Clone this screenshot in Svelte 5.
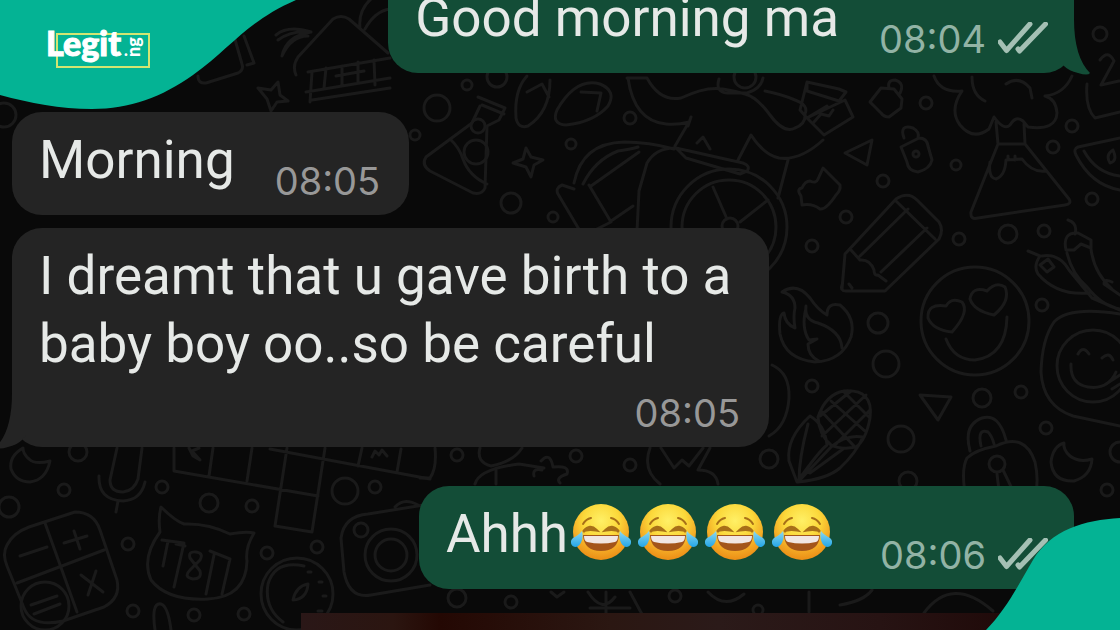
<script>
  const messages = [
    { side: 'out', text: 'Good morning ma', time: '08:04', read: true, tail: true, gap: true },
    { side: 'in', text: 'Morning', time: '08:05' },
    { side: 'in', text: 'I dreamt that u gave birth to a baby boy oo..so be careful', time: '08:05', tail: true, gap: true, long: true },
    { side: 'out', text: 'Ahhh', laughs: 4, time: '08:06', read: true }
  ];

  // Small rings scattered between the wallpaper drawings: x, y, radius
  const rings = [
    [437, 108, 13], [467, 85, 5], [497, 77, 10], [415, 135, 5], [511, 203, 10], [553, 217, 5],
    [571, 144, 5], [630, 118, 6], [926, 103, 6], [956, 165, 5], [1072, 126, 6], [1053, 147, 6],
    [1092, 199, 6], [883, 181, 6], [846, 217, 6], [812, 246, 6], [959, 239, 6], [1008, 234, 9],
    [1044, 231, 6], [878, 323, 10], [886, 364, 13], [812, 386, 6], [1042, 305, 6], [1021, 392, 6],
    [982, 398, 9], [1046, 428, 6], [901, 439, 13], [769, 459, 9], [908, 481, 9], [1107, 490, 6],
    [64, 490, 6], [78, 452, 9], [9, 507, 10], [162, 487, 6], [209, 503, 9], [252, 506, 6],
    [345, 491, 13], [375, 487, 6], [128, 544, 6], [267, 553, 6], [317, 547, 6], [133, 611, 6],
    [194, 615, 6], [244, 614, 6], [361, 530, 7], [457, 455, 6], [576, 456, 6], [630, 465, 6],
    [457, 598, 9], [511, 602, 6], [675, 596, 6], [758, 610, 5], [1120, 452, 10], [4, 115, 12],
    [1100, 34, 7], [1068, 35, 3]
  ];
</script>

{#snippet ticks()}
  <svg class="ticks" viewBox="0 0 50 34" role="img" aria-label="Delivered">
    <path d="M2 20 8.500 28.500 32 2M21.500 29 47.500 2M21.500 29 20 27" />
  </svg>
{/snippet}

{#snippet laugh()}
  <svg class="laugh" viewBox="0 0 60 60" role="img" aria-label="Face with tears of joy">
    <circle cx="30" cy="30" r="28" fill="url(#face)" />
    <path d="M12 22q3-5 8-6M48 22q-3-5-8-6" class="brow" />
    <path d="M13 29q6-7 12-1-6-1-10 0M47 29q-6-7-12-1 6-1 10 0" class="eye" />
    <path d="M12 33h36q-1 16-18 16T12 33z" fill="#a4551a" />
    <path d="M13 34h34q0 5-3 6-14 3-28 0-3-1-3-6z" fill="#f1e6e2" />
    <path d="M11 29c2 7-1 15-6 16-5 0-7-6-3-9 3-2 6-3 9-7z" fill="url(#tear)" />
    <path d="M49 29c-2 7 1 15 6 16 5 0 7-6 3-9-3-2-6-3-9-7z" fill="url(#tear)" />
  </svg>
{/snippet}

<svg class="defs" aria-hidden="true">
  <defs>
    <radialGradient id="face" cx=".5" cy=".3" r=".72">
      <stop offset="0" stop-color="#fff066" />
      <stop offset=".45" stop-color="#fbd83a" />
      <stop offset=".75" stop-color="#f3a824" />
      <stop offset="1" stop-color="#ea8a14" />
    </radialGradient>
    <linearGradient id="tear" x1="0" y1="0" x2="0" y2="1">
      <stop offset="0" stop-color="#8fd8ee" />
      <stop offset="1" stop-color="#23a6e8" />
    </linearGradient>
  </defs>
</svg>

<div class="page">
  <svg class="wallpaper" viewBox="0 0 1120 630" preserveAspectRatio="xMidYMid slice" aria-hidden="true">
    {#each rings as [cx, cy, r]}
      <circle {cx} {cy} {r} />
    {/each}

    <!-- parcel, star, beach house -->
    <path d="M198 76q0 8 8 7l32-10q6-3 4-9l-8-28M244 36l10 27-7 2M258 88l13 2 7-8 2 13 8 6-11 1-6 9-4-12zM296 75q-4-9 2-18l35-38q8-5 16 0l39 34M276 35q12-10 35-3-20-2-33 8M311 32q-25 4-29 24 9-20 26-20M360 28q-2-18 12-30M365 29q10-18 25-20M308 72l82-14M306 92l84-14M312 100l78-12M312 72l-2 30M326 68l-2 20M342 66v20M358 62v20M374 60l1 25M336 76l28-5" />
    <!-- party flask -->
    <path d="M478 97l27 11-6 12-12 6-2 62q-3 7-12 5l-43-22q-9-6-4-14l46-34 8-17M482 105l22 9M450 139q9 8 13 20 6 17 24 25" />
    <circle cx="478" cy="126" r="7" /><circle cx="476" cy="152" r="12" />
    <path d="M526 148l5 9 12 3-9 5-3 12-5-10-13-4 10-4z" />
    <!-- leaves -->
    <path d="M527 76q-13 14-11 42 2 11 12 8 22-14 22-46M527 92l15-8 7 13M566 125q-15-1-9-15 19-33 43-26 17 7 8 22-14 16-42 19zM581 92l20 1-4 18" />
    <!-- whale, flower and scooter -->
    <path d="M627 78h20q13 24 34 20 25-12 42-9 12 2 22 5 12 3 25 21 14 19 25 13 11-4 10-14 4-9-10-14-14-6-30-9M628 78q6 43 38 46 12 1 23-2l-14 24M691 117l-3 9M674 148q-18 0-27 15l-8 28-2 40M574 189l-12-4q-7 3-4 9l22 37M589 185l22 37-16 8M574 183q8-40 50-41 25 0 50 7M583 184q12-24 35-33 14-2 20-4M591 186l48-34M611 221l22-15M676 148l67 15q8 3 4 8l-7 3-54-16zM697 143l6-6 7 12M738 160l13-25q13 20 28 23 21 3 44-18M788 160l-10 38M719 79q-4 13 8 14h20q14-4 16-15M807 82l32 7 7 3-7 9-32-10zM807 82l-7 28 7 8 20-12M807 118l38-18 8 17-29 18zM814 122l7-8 8 2 4-6" />
    <circle cx="745" cy="77" r="11" />
    <circle cx="729" cy="227" r="58" /><circle cx="729" cy="227" r="47" />
    <path d="M713 187l14 32M740 222l28-22" /><circle cx="730" cy="226" r="8" />
    <path d="M772 365q18 8 17 33-2 28-20 38" />
    <!-- small lock, tag, triangle, splash -->
    <path d="M870 102l11-14 13 1 8 10-1 9-12 9q-5 0-8-4zM889 88q-2-8 6-8 10 3 5 13M901 147l18-9q8 0 9 8l4 14q-2 9-14 12-10-1-11-10zM904 138q-5-14 9-10 7 4 5 10M845 153l27-13-5 25zM823 168l17 17q1 5-4 10-10 15-16 14-8-6-18-4-1-9-1-9-5-7 1-8 3-7 8-7 6 3 8-2z" />
    <circle cx="916" cy="154" r="3" />
    <!-- volcano -->
    <path d="M934 76q6 17 28 15-13 19-2 34 13 16 29 4l5-12q10 14 16 8 6-10 13-4l5 6q28 4 29-14-1-14-12-17 19-2 27-20M972 77q0 18 13 24M1006 84q13-9 24 4l2 10M996 122l2 22-27 68q-1 8 7 6l87-13q7-1 4-6l-44-55-1-20M999 144h25M990 162q-2 16 6 17 9-3 10-19l16-1q10 14 24 12M1008 156v4M1015 156v4" />
    <!-- pencil -->
    <path d="M842 289l3-35 51-55q12-8 21 1l22 22q5 8 0 17l-54 52h-39q-6 0-4-6zM851 250l9 10q10-1 14 10 0 6 4 5l8 6M860 256l48-47M881 272l46-44M896 201l39 38M849 284l3 4" />
    <!-- flame -->
    <path d="M782 292q15-10 28 6 8 12 17 17 0-13 13-10 16 13 11 32-9 24-36 25-30-3-35-28-2-19 4-21 1 11 11 15-2-12 0-20 0-13-13-16zM806 306q-2 14 12 17 23 8 24 25M806 308q-5 20 3 32l8-1-9 5q0 12 11 17" />
    <!-- heart-eyed face -->
    <circle cx="975" cy="321" r="54" />
    <path d="M952 332q-19-2-24-14-1-15 18-12 5-9 16-4 8 10-10 30zM994 315q-20-4-24-16 2-13 17-8 9-10 18-4 6 14-11 28zM946 339q8 21 29 21 31-4 32-43" />
    <!-- chilli peppers -->
    <path d="M1028 251l12 5q-7 10-2 18 19 22 51 19M1042 256q17-3 27 14l23 28 28 12M1040 265l8-6 6 8-7 5zM1068 220q10 3 7 14M1066 250q-4-18 12-17l13 7v8l-10-4-7 6zM1067 253q5 21 20 34 15 19 33 22M1091 249q3 24 21 40M1112 282q-8-4-8 2l16 11" />
    <!-- watermelon, calendar -->
    <path d="M1120 138l-42 9q-5 2-2 8 15 30 44 35M1084 151q12 22 36 25M1113 150q-8 5-3 13 8-2 3-13M1087 84q-2 24 8 34l25-6M1100 60q8-11 14 1l-13 24 18-4" />
    <!-- hugging face -->
    <path d="M1120 314q-51-8-66 8-12 17-13 50 2 34 32 44l47 10" />
    <circle cx="1093" cy="366" r="36" />
    <path d="M1071 364q-1 20 17 23 20 3 28-15M1078 354q5-9 11 0M1102 358q7-7 11 2M1106 384l14-9M1112 389l8-5" />
    <!-- corn -->
    <path d="M818 417q8-23 26-26 30-2 26 27-4 22-14 29-15 3-25-2-12-10-13-28zM831 401l35 31M844 392l25 25M821 411l33 35M866 395l-44 41M870 410l-36 36M851 391l-31 25M810 416q-24 22-21 45l8 21q23-32 30-37-2-20-17-29zM808 424q-9 34-9 57M798 482q29-3 42-14 16-15 23-31-17-3-32 10zM810 473l33-24" />
    <!-- paper plane -->
    <path d="M920 395l31 2-13 23z" />
    <!-- padlock -->
    <path d="M970 451q-7-26 12-33 17-5 24 22M981 446q-4-18 7-14 4 4 6 12M967 458q8-8 29-12 29-14 39 16 5 22-2 41h-66q-7-32 0-45z" />
    <circle cx="997" cy="464" r="8" /><path d="M997 474l3 25 16-2-13-27" />
    <path d="M1064 443q-11 3-13 19 2 20 23 19 17-5 18-22-13 4-22-3-7-6-6-13z" />
    <path d="M23 448q-14 8-12 21 5 13 19 13 16-2 20-21-15 4-21-2-6-5-6-11z" />
    <!-- microphone -->
    <path d="M117 448l-7 32q0 12 13 12 11-1 15-13l4-31M99 476q-1 24 24 25 18-1 22-19M118 501l-2 11" />
    <!-- crossword -->
    <path d="M174 448v23l144 25M213 448l-4 28M252 448l-5 33M287 448l-12 78 37 6 13-84M270 449l160 30M362 448l-4 18M401 449l-4 23M189 448l4 8 7 4-8-9 7-3M372 457l3-6 4 4 3-5 5 6" />
    <!-- calculator -->
    <path d="M7 545q6-12 22-18l46-15q19 0 25 18l17 50q4 18-13 27l-41 14q-31 7-39-13L7 566q-5-12 0-21zM45 523l32 89M17 583l87-33M20 556l27-9M74 531l6 18M64 543l23-7M81 575l22 17M96 571l-8 24" />
    <circle cx="45" cy="606" r="24" /><path d="M31 605l26-9M34 614l26-10" />
    <!-- cat -->
    <path d="M161 507q-3 11-1 25-19 26-9 48 16 21 57 19 38-2 39-38-2-13 7-28-8-2-24 1-22-11-46-10-9-3-23-17zM162 540l22 3-10 44M168 541l-5 25M196 552q-8-1-6 6l10 13q2 8-7 8-10-2-3-9l10-10q4-7-4-8M210 551l20 8-8 35M214 555l-8 39M176 544l9 2" />
    <!-- stopwatch -->
    <circle cx="297" cy="594" r="36" /><path d="M304 566q-29-6-36 18-4 24 15 38M293 600q3-14 15-16-1 15-15 16zM308 572h3M319 582h3M323 596h3M318 611h4M155 630q-4-28 6-26 7 2 10 26" />
    <!-- camera -->
    <path d="M430 504l-62 10q-24 2-27 24l3 34q5 27 27 23l59-10M395 507q9-10 23-2" />
    <circle cx="391" cy="555" r="26" /><circle cx="391" cy="555" r="16" />
    <!-- drawings below and above the replies -->
    <path d="M420 478h10q7-10 5-30M480 448q-4 14 11 18 22-4 31-18M475 484q4-15 44-20l25 4M496 470v14M541 461q9-10 12 6 17-2 14 7-12 4-7 9M534 476q-2-8 8-6M650 448q-8 22 10 36M661 448l13 20 8-8 7 6 14-18M710 448l-12 22q18 0 20 14M588 592q14 22 27 5M606 592v26M590 608h40M630 592l14 26M708 592q17 18 36 2M809 592v20M840 605q24-4 32-15M924 613q28-38 69-2M551 592l6 5 7-5" />
  </svg>

  <main class="chat">
    {#each messages as m}
      <article class="bubble {m.side}" class:gap={m.gap} class:long={m.long}>
        <p class="text">{m.text}{#if m.laughs}<span class="laughs">{#each Array(m.laughs) as _}{@render laugh()}{/each}</span>{/if}</p>
        <footer class="meta">
          <time>{m.time}</time>
          {#if m.read}{@render ticks()}{/if}
        </footer>
        {#if m.tail}
          <svg class="tail" viewBox="0 0 30 56" aria-hidden="true">
            <path d="M0 0h14q0 38 16 54-2 3-12 0-9-2-14-7L0 42z" />
          </svg>
        {/if}
      </article>
    {/each}
    <div class="photo"></div>
  </main>

  <svg class="corner top" viewBox="0 0 296 110" aria-hidden="true">
    <path d="M0 0h296C246 22 232 47 193 75 162 97 130 109 92 109 60 109 30 103 0 95z" />
  </svg>
  <svg class="corner bottom" viewBox="0 0 134 112" aria-hidden="true">
    <path d="M134 0C98 2 65 12 47 42 34 64 20 92 0 112h134z" />
  </svg>
  <svg class="logo" viewBox="0 0 104 44" role="img" aria-label="Legit.ng">
    <rect x="9" y="9" width="92" height="33" />
    <text class="name" x="-2" y="31">Legit</text>
    <text class="dot" x="76" y="31">.</text>
    <text class="suffix" transform="translate(92 32) rotate(-90)">ng</text>
  </svg>
</div>

<style>
  :global(body) {
    margin: 0;
    background: #090909;
  }
  .page {
    position: relative;
    display: flex;
    min-height: 100vh;
    overflow: hidden;
    background: #090909;
    color: #e6e9e7;
    font-family: Roboto, 'Liberation Sans', sans-serif;
  }
  .defs {
    position: absolute;
    width: 0;
    height: 0;
  }
  .wallpaper {
    position: absolute;
    inset: 0;
    width: 100%;
    height: 100%;
    fill: none;
    stroke: #1a1a1a;
    stroke-width: 3;
    stroke-linejoin: round;
    stroke-linecap: round;
  }
  .chat {
    position: relative;
    flex: 1;
    display: flex;
    flex-direction: column;
    gap: 13px;
    margin-top: -30px;
    padding: 0 46px 0 12px;
  }
  .bubble {
    position: relative;
    box-sizing: border-box;
    display: flex;
    min-height: 103px;
    padding: 14px 29px 11px 27px;
    border-radius: 30px;
  }
  .in {
    align-self: flex-start;
    background: #242424;
    --fill: #242424;
    --muted: #989898;
  }
  .out {
    align-self: flex-end;
    background: #134d37;
    --fill: #134d37;
    --muted: #92b3a5;
    padding-right: 26px;
  }
  .gap {
    margin-bottom: 26px;
  }
  .text {
    display: flex;
    margin: 0;
    font-size: 53px;
    line-height: 68px;
  }
  .meta {
    display: flex;
    align-items: center;
    align-self: flex-end;
    gap: 12px;
    margin-left: 40px;
    color: var(--muted);
    font-family: Inter, sans-serif;
    font-size: 38px;
    line-height: 46px;
  }
  .long {
    flex-direction: column;
    max-width: 757px;
  }
  .long .meta {
    margin-top: 12px;
  }
  .ticks {
    width: 50px;
    height: 34px;
    fill: none;
    stroke: #a4c0b4;
    stroke-width: 5;
    stroke-linecap: round;
    stroke-linejoin: round;
  }
  .laughs {
    display: flex;
    align-items: flex-start;
    gap: 7px;
    margin: 0 8px 0 3px;
  }
  .laugh {
    width: 60px;
    height: 60px;
    margin-top: 2px;
  }
  .brow,
  .eye {
    fill: none;
    stroke: #a87018;
    stroke-width: 2;
    stroke-linecap: round;
  }
  .eye {
    stroke-width: 3;
  }
  .tail {
    position: absolute;
    right: -16px;
    bottom: -2px;
    width: 30px;
    height: 56px;
    fill: var(--fill);
  }
  .in .tail {
    right: auto;
    left: -16px;
    transform: scaleX(-1);
  }
  .photo {
    flex: 1;
    min-height: 17px;
    margin: 11px 0 0 289px;
    background: linear-gradient(90deg, #2a1717, #2b1510 12%, #240803 18%, #2b1712 40%, #2b1a19 54%, #271313 75%, #1c0504);
  }
  .corner {
    position: absolute;
    fill: #04b394;
  }
  .top {
    top: 0;
    left: 0;
    width: 296px;
    height: 110px;
  }
  .bottom {
    right: 0;
    bottom: 0;
    width: 134px;
    height: 112px;
  }
  .logo {
    position: absolute;
    top: 25px;
    left: 48px;
    width: 104px;
    height: 44px;
    overflow: visible;
    fill: #fff;
    stroke: #fff;
    font-family: Lato, sans-serif;
    font-weight: 900;
  }
  .logo rect {
    fill: none;
    stroke: #d3e572;
    stroke-width: 2;
  }
  .name {
    font-size: 34px;
    stroke-width: 1;
  }
  .dot {
    font-size: 16px;
    stroke: none;
  }
  .suffix {
    font-size: 18px;
    stroke: none;
  }
</style>
